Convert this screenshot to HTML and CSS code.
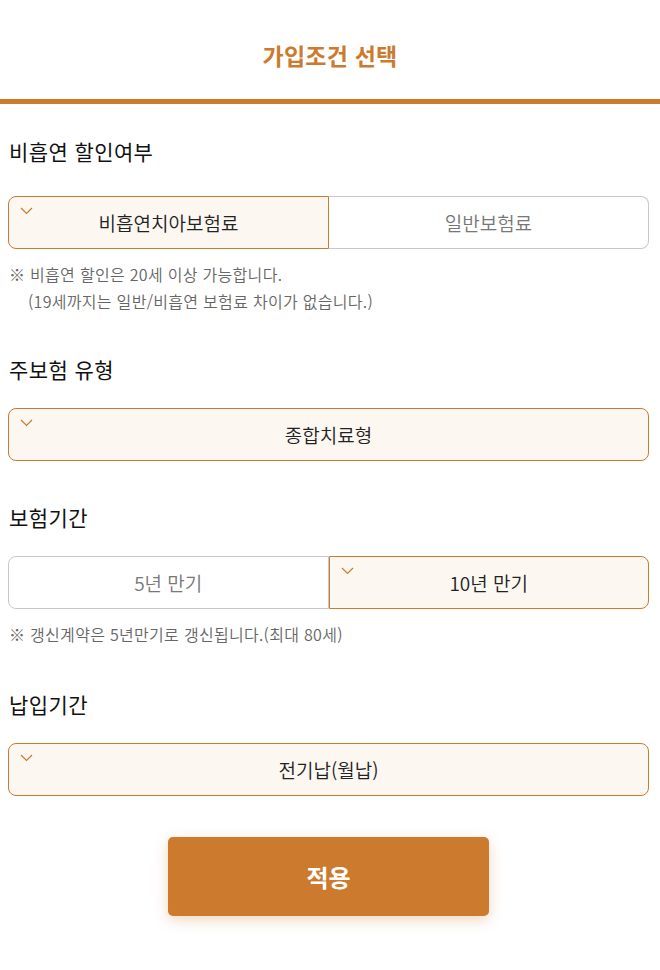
FILE: index.html
```html
<!DOCTYPE html>
<html lang="ko">
<head>
    <meta charset="UTF-8">
    <meta name="viewport" content="width=device-width, initial-scale=1.0">
    <title>가입조건 선택</title>
    <link rel="stylesheet" href="styles.css">
</head>
<body>

<div class="header">
    <h1>가입조건 선택</h1>
</div>

<div class="content">
    <div class="section first">
        <h2>비흡연 할인여부</h2>
        <div class="options">
            <button class="option selected">
                <svg class="check" width="13" height="8" viewBox="0 0 13 8"><polyline points="1,1 6.5,6.5 12,1" fill="none" stroke="#cc7a2e" stroke-width="1.2"/></svg>
                비흡연치아보험료
            </button>
            <button class="option">일반보험료</button>
        </div>
        <p class="note">
            <span>※ 비흡연 할인은 20세 이상 가능합니다.</span>
            <span class="indent">(19세까지는 일반/비흡연 보험료 차이가 없습니다.)</span>
        </p>
    </div>

    <div class="section">
        <h2>주보험 유형</h2>
        <div class="options">
            <button class="option selected">
                <svg class="check" width="13" height="8" viewBox="0 0 13 8"><polyline points="1,1 6.5,6.5 12,1" fill="none" stroke="#cc7a2e" stroke-width="1.2"/></svg>
                종합치료형
            </button>
        </div>
    </div>

    <div class="section">
        <h2>보험기간</h2>
        <div class="options">
            <button class="option">5년 만기</button>
            <button class="option selected">
                <svg class="check" width="13" height="8" viewBox="0 0 13 8"><polyline points="1,1 6.5,6.5 12,1" fill="none" stroke="#cc7a2e" stroke-width="1.2"/></svg>
                10년 만기
            </button>
        </div>
        <p class="note">
            <span>※ 갱신계약은 5년만기로 갱신됩니다.(최대 80세)</span>
        </p>
    </div>

    <div class="section">
        <h2>납입기간</h2>
        <div class="options">
            <button class="option selected">
                <svg class="check" width="13" height="8" viewBox="0 0 13 8"><polyline points="1,1 6.5,6.5 12,1" fill="none" stroke="#cc7a2e" stroke-width="1.2"/></svg>
                전기납(월납)
            </button>
        </div>
    </div>

    <div class="actions">
        <button class="apply">적용</button>
    </div>
</div>

</body>
</html>
```

FILE: styles.css
```css
body {
    margin: 0;
    font-family: "Noto Sans CJK KR", "Noto Sans", sans-serif;
    background-color: white;
    color: #111;
}
.header {
    height: 99px;
    display: flex;
    justify-content: center;
    align-items: center;
    border-bottom: 5px solid #cc7a2e;
}
.header h1 {
    margin: 0;
    font-size: 23px;
    font-weight: bold;
    color: #cc7a2e;
    letter-spacing: 0.2px;
    padding-top: 10px;
}
.content {
    padding: 33px 11px 0 8px;
}
.section {
    margin-bottom: 42px;
}
.section.first {
    margin-bottom: 40px;
}
.section h2 {
    margin: 0 0 25px 1px;
    font-size: 21px;
    line-height: 28px;
    font-weight: 400;
    color: #111;
    letter-spacing: 0.4px;
}
.section.first h2 {
    margin-bottom: 31px;
}
.options {
    display: flex;
}
.option {
    position: relative;
    flex: 1;
    height: 53px;
    margin: 0;
    padding: 0;
    border: 1px solid #c8c8c8;
    background-color: white;
    font-family: inherit;
    font-size: 19px;
    font-weight: 350;
    color: #777;
    cursor: pointer;
}
.option:first-child {
    border-radius: 8px 0 0 8px;
}
.option:last-child {
    border-radius: 0 8px 8px 0;
}
.option:only-child {
    border-radius: 8px;
}
.option + .option {
    border-left: none;
}
.option.selected {
    border-color: #cc7a2e;
    background-color: #fcf7f1;
    color: #222;
}
.option + .option.selected {
    border-left: 1px solid #cc7a2e;
}
.check {
    position: absolute;
    left: 11px;
    top: 10px;
}
.note {
    margin: 12px 0 0 1px;
    font-size: 16px;
    font-weight: 350;
    line-height: 27px;
    color: #666;
    letter-spacing: 0.3px;
}
.note span {
    display: block;
}
.note .indent {
    padding-left: 19px;
}
.actions {
    display: flex;
    justify-content: center;
    padding-bottom: 40px;
}
.apply {
    width: 321px;
    height: 79px;
    margin-top: -1px;
    border: none;
    border-radius: 5px;
    background-color: #cc7a2e;
    color: white;
    font-family: inherit;
    font-size: 24px;
    font-weight: bold;
    box-shadow: 0 4px 14px rgba(204, 122, 46, 0.3);
    cursor: pointer;
}
```
